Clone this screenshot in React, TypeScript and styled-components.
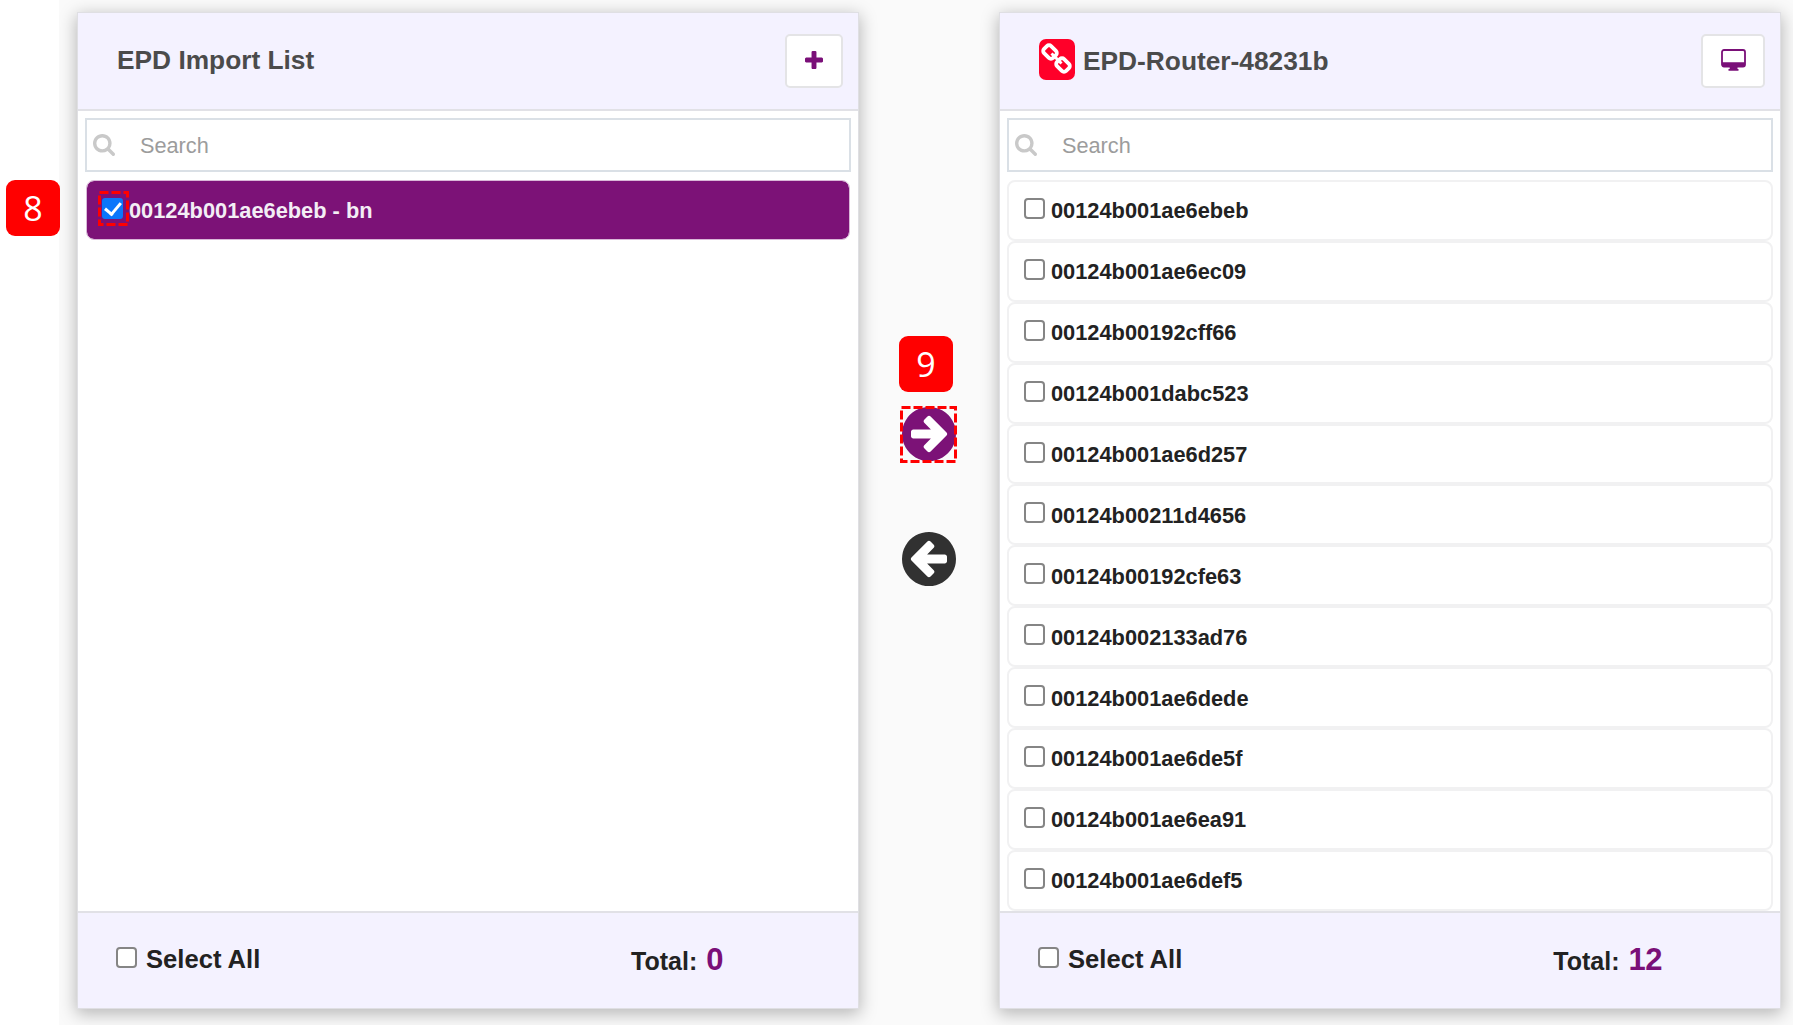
import React, { useState } from 'react';
import styled, { createGlobalStyle } from 'styled-components';

const Global = createGlobalStyle`
  * { box-sizing: border-box; }
  body { margin: 0; background: #fff; font-family: "Liberation Sans", Arial, sans-serif; overflow: hidden; }
`;

const Page = styled.div`
  position: relative;
  display: flex;
  width: 1793px;
  height: 1025px;
  padding-left: 59px;
`;

const Workspace = styled.main`
  flex: 1;
  display: flex;
  padding: 12px 12px 16px 18px;
  background: #fafafa;
  overflow: hidden;
`;

const Card = styled.section`
  flex: 1;
  display: flex;
  flex-direction: column;
  background: #fff;
  border: 1px solid #dfdfe3;
  box-shadow: 0 4px 16px 1px rgba(0, 0, 0, 0.27);
`;

const CardHeader = styled.header`
  display: flex;
  align-items: center;
  height: 98px;
  padding: 0 15px 0 39px;
  background: #f4f2ff;
  border-bottom: 2px solid #e1e1e6;
`;

const Title = styled.h2`
  flex: 1;
  margin: 0;
  padding-bottom: 2px;
  font-size: 26.3px;
  line-height: 30px;
  font-weight: 700;
  color: #4b4b4b;
`;

const LinkedTitle = styled(Title)`
  padding-bottom: 0;
`;

const Unlink = styled.span`
  display: flex;
  align-items: center;
  justify-content: center;
  width: 36px;
  height: 41px;
  margin: 0 8px 3px 0;
  background: #ff0029;
  border-radius: 7px;
`;

const HeaderButton = styled.button<{ $width: number }>`
  display: flex;
  align-items: center;
  justify-content: center;
  width: ${(p) => p.$width}px;
  height: 54px;
  margin-bottom: 1px;
  padding: 0 0 2px;
  color: #7a0f78;
  background: #fff;
  border: 2px solid #e4e4e6;
  border-radius: 5px;
`;

const Body = styled.div`
  flex: 1;
  min-height: 0;
  padding: 7px 7px 0;
  overflow: hidden;
`;

const SearchBox = styled.label`
  display: flex;
  align-items: center;
  height: 54px;
  padding: 0 6px;
  border: 2px solid #dae0e6;
  color: #c9c9c9;
`;

const SearchInput = styled.input`
  flex: 1;
  margin-left: 25px;
  padding: 1px 0 0;
  border: 0;
  outline: 0;
  background: transparent;
  font: 21.7px "Liberation Sans", Arial, sans-serif;
  &::placeholder { color: #9c9c9c; opacity: 1; }
`;

const List = styled.ul`
  display: flex;
  flex-direction: column;
  margin: 8px 0 0;
  padding: 0;
  list-style: none;
`;

const Row = styled.li<{ $selected?: boolean }>`
  display: flex;
  align-items: center;
  flex: none;
  height: ${(p) => (p.$selected ? 60 : 60.9)}px;
  margin: 0 ${(p) => (p.$selected ? 1 : 0)}px;
  padding: 0 15px;
  font-size: 21.8px;
  font-weight: 700;
  color: ${(p) => (p.$selected ? '#f3eef5' : '#222')};
  background: ${(p) => (p.$selected ? '#7c1277' : '#fff')};
  background-clip: padding-box;
  border: ${(p) => (p.$selected ? '1px solid #d9b8d8' : '2px solid #f1f1f2')};
  border-radius: 8px;
`;

const Tick = styled.input<{ $gap: number }>`
  appearance: none;
  flex: none;
  display: grid;
  place-items: center;
  width: 21px;
  height: 21px;
  margin: 0 ${(p) => p.$gap}px 4px 0;
  background: #fff;
  border: 2px solid #858585;
  border-radius: 4px;
  &:checked {
    background: #0b76fb;
    border-color: #0b76fb;
    border-radius: 3px;
  }
  &:checked::after {
    content: '';
    width: 7px;
    height: 13px;
    margin-top: -3px;
    border: solid #fff;
    border-width: 0 3px 3px 0;
    transform: rotate(40deg);
  }
`;

const RowLabel = styled.span`
  line-height: 26px;
  padding-top: 2px;
`;

const CardFooter = styled.footer`
  display: flex;
  align-items: center;
  justify-content: space-between;
  height: 97px;
  padding: 0 120px 2px 38px;
  background: #f4f2ff;
  border-top: 2px solid #e1e1e6;
  color: #222;
  font-weight: 700;
`;

const SelectAll = styled.label`
  display: flex;
  align-items: center;
  margin-bottom: 1px;
  font-size: 25.6px;
`;

const Total = styled.div<{ $right: number }>`
  display: flex;
  align-items: baseline;
  margin-right: ${(p) => p.$right}px;
  padding-top: 1px;
  font-size: 25px;
  b { margin-left: 9px; font-size: 31px; color: #7a0f78; letter-spacing: -0.5px; }
`;

const Transfer = styled.div`
  display: flex;
  flex-direction: column;
  align-items: center;
  gap: 71px;
  width: 140px;
  padding-top: 395px;
`;

const MoveButton = styled.button<{ $color: string }>`
  display: flex;
  padding: 0;
  border: 0;
  border-radius: 50%;
  background: #fff;
  color: ${(p) => p.$color};
`;

const Step = styled.div<{ $x: number; $y: number }>`
  position: absolute;
  left: ${(p) => p.$x}px;
  top: ${(p) => p.$y}px;
  width: 54px;
  height: 56px;
  border-radius: 9px;
  background: #f00;
  color: #fff;
  font: 34px/56px "Open Sans", "Noto Sans", sans-serif;
  text-align: center;
`;

const Outline = styled.svg<{ $x: number; $y: number }>`
  position: absolute;
  left: ${(p) => p.$x}px;
  top: ${(p) => p.$y}px;
  pointer-events: none;
`;

const PLUS = 'M1600 736v192q0 40-28 68t-68 28h-416v416q0 40-28 68t-68 28h-192q-40 0-68-28t-28-68v-416h-416q-40 0-68-28t-28-68v-192q0-40 28-68t68-28h416v-416q0-40 28-68t68-28h192q40 0 68 28t28 68v416h416q40 0 68 28t28 68z';
const DESKTOP = 'M1728 992v-832q0-13-9.5-22.5t-22.5-9.5h-1600q-13 0-22.5 9.5t-9.5 22.5v832q0 13 9.5 22.5t22.5 9.5h1600q13 0 22.5-9.5t9.5-22.5zm128-832v1088q0 66-47 113t-113 47h-544q0 37 16 77.5t32 71 16 43.5q0 26-19 45t-45 19h-512q-26 0-45-19t-19-45q0-14 16-44t32-70 16-78h-544q-66 0-113-47t-47-113v-1088q0-66 47-113t113-47h1600q66 0 113 47t47 113z';
const SEARCH = 'M1216 832q0-185-131.5-316.5t-316.5-131.5-316.5 131.5-131.5 316.5 131.5 316.5 316.5 131.5 316.5-131.5 131.5-316.5zm512 832q0 52-38 90t-90 38q-54 0-90-38l-343-342q-179 124-399 124-143 0-273.5-55.5t-225-150-150-225-55.5-273.5 55.5-273.5 150-225 225-150 273.5-55.5 273.5 55.5 225 150 150 225 55.5 273.5q0 220-124 399l343 343q37 37 37 90z';
const ARROW = 'M1413 896q0-27-18-45l-91-91-362-362q-18-18-45-18t-45 18l-91 91q-18 18-18 45t18 45l189 189h-502q-26 0-45 19t-19 45v128q0 26 19 45t45 19h502l-189 189q-19 19-19 45t19 45l91 91q18 18 45 18t45-18l362-362 91-91q18-18 18-45zm251 0q0 209-103 385.5t-279.5 279.5-385.5 103-385.5-103-279.5-279.5-103-385.5 103-385.5 279.5-279.5 385.5-103 385.5 103 279.5 279.5 103 385.5z';

function Icon({ d, box, w, h, flip }: { d: string; box: string; w: number; h: number; flip?: boolean }) {
  return (
    <svg width={w} height={h} viewBox={box} fill="currentColor">
      <path d={d} transform={flip ? 'matrix(-1 0 0 1 1792 0)' : undefined} />
    </svg>
  );
}

function ChainIcon() {
  return (
    <svg width="36" height="41" viewBox="0 0 36 41" fill="none" stroke="#fff" strokeWidth="3.8">
      <g transform="rotate(45 11 13)">
        <rect x="4.6" y="8" width="12.8" height="10" rx="3" />
      </g>
      <g transform="rotate(45 24 26)">
        <rect x="17.6" y="21" width="12.8" height="10" rx="3" />
      </g>
      <path d="M12.5 14.5l10 10" strokeWidth="3" />
    </svg>
  );
}

/* Monitor with a solid lower bezel and a short stand */
function MonitorIcon() {
  return (
    <svg width="25" height="22" viewBox="0 0 25 22" fill="none">
      <rect x="1" y="1" width="23" height="16.5" rx="2" stroke="currentColor" strokeWidth="1.8" />
      <path d="M1 13.3h23v2.7a2 2 0 0 1-2 2h-5.5v2h1v1.8h-10v-1.8h1.200v-2H3a2 2 0 0 1-2-2z" fill="currentColor" />
    </svg>
  );
}

interface Device { id: string; selected?: boolean }

interface PanelProps {
  title: string;
  linked?: boolean;
  action: React.ReactNode;
  actionWidth: number;
  devices: Device[];
  total: number;
}

function Panel({ title, linked, action, actionWidth, devices, total }: PanelProps) {
  const [query, setQuery] = useState('');
  return (
    <Card>
      <CardHeader>
        {linked && <Unlink><ChainIcon /></Unlink>}
        {linked ? <LinkedTitle>{title}</LinkedTitle> : <Title>{title}</Title>}
        <HeaderButton $width={actionWidth}>{action}</HeaderButton>
      </CardHeader>
      <Body>
        <SearchBox>
          <Icon d={SEARCH} box="64 128 1664 1664" w={22} h={22} />
          <SearchInput placeholder="Search" value={query} onChange={(e) => setQuery(e.target.value)} />
        </SearchBox>
        <List>
          {devices.filter((d) => d.id.includes(query)).map((d) => (
            <Row key={d.id} $selected={d.selected}>
              <Tick type="checkbox" defaultChecked={d.selected} $gap={6} />
              <RowLabel>{d.id}</RowLabel>
            </Row>
          ))}
        </List>
      </Body>
      <CardFooter>
        <SelectAll><Tick type="checkbox" $gap={9} />Select All</SelectAll>
        <Total $right={total > 9 ? -2 : 15}>Total:<b>{total}</b></Total>
      </CardFooter>
    </Card>
  );
}

const routerDevices: Device[] = [
  '00124b001ae6ebeb', '00124b001ae6ec09', '00124b00192cff66', '00124b001dabc523',
  '00124b001ae6d257', '00124b00211d4656', '00124b00192cfe63', '00124b002133ad76',
  '00124b001ae6dede', '00124b001ae6de5f', '00124b001ae6ea91', '00124b001ae6def5',
].map((id) => ({ id }));

export default function App() {
  return (
    <Page>
      <Global />
      <Workspace>
        <Panel
          title="EPD Import List"
          action={<Icon d={PLUS} box="192 128 1408 1408" w={18} h={18} />}
          actionWidth={58}
          devices={[{ id: '00124b001ae6ebeb - bn', selected: true }]}
          total={0}
        />
        <Transfer>
          <MoveButton $color="#7c1277"><Icon d={ARROW} box="128 128 1536 1536" w={54} h={54} /></MoveButton>
          <MoveButton $color="#313131"><Icon d={ARROW} box="128 128 1536 1536" w={54} h={54} flip /></MoveButton>
        </Transfer>
        <Panel
          title="EPD-Router-48231b"
          linked
          action={<MonitorIcon />}
          actionWidth={64}
          devices={routerDevices}
          total={12}
        />
      </Workspace>
      <Step $x={6} $y={180}>8</Step>
      <Step $x={899} $y={336}>9</Step>
      <Outline $x={98} $y={191} width="31" height="35">
        <rect x="1.5" y="1.5" width="28" height="32" fill="none" stroke="#f00" strokeWidth="3" strokeDasharray="9 3" />
      </Outline>
      <Outline $x={900} $y={406} width="57" height="57">
        <rect x="1.5" y="1.5" width="54" height="54" fill="none" stroke="#f00" strokeWidth="3" strokeDasharray="9 3" />
      </Outline>
    </Page>
  );
}
